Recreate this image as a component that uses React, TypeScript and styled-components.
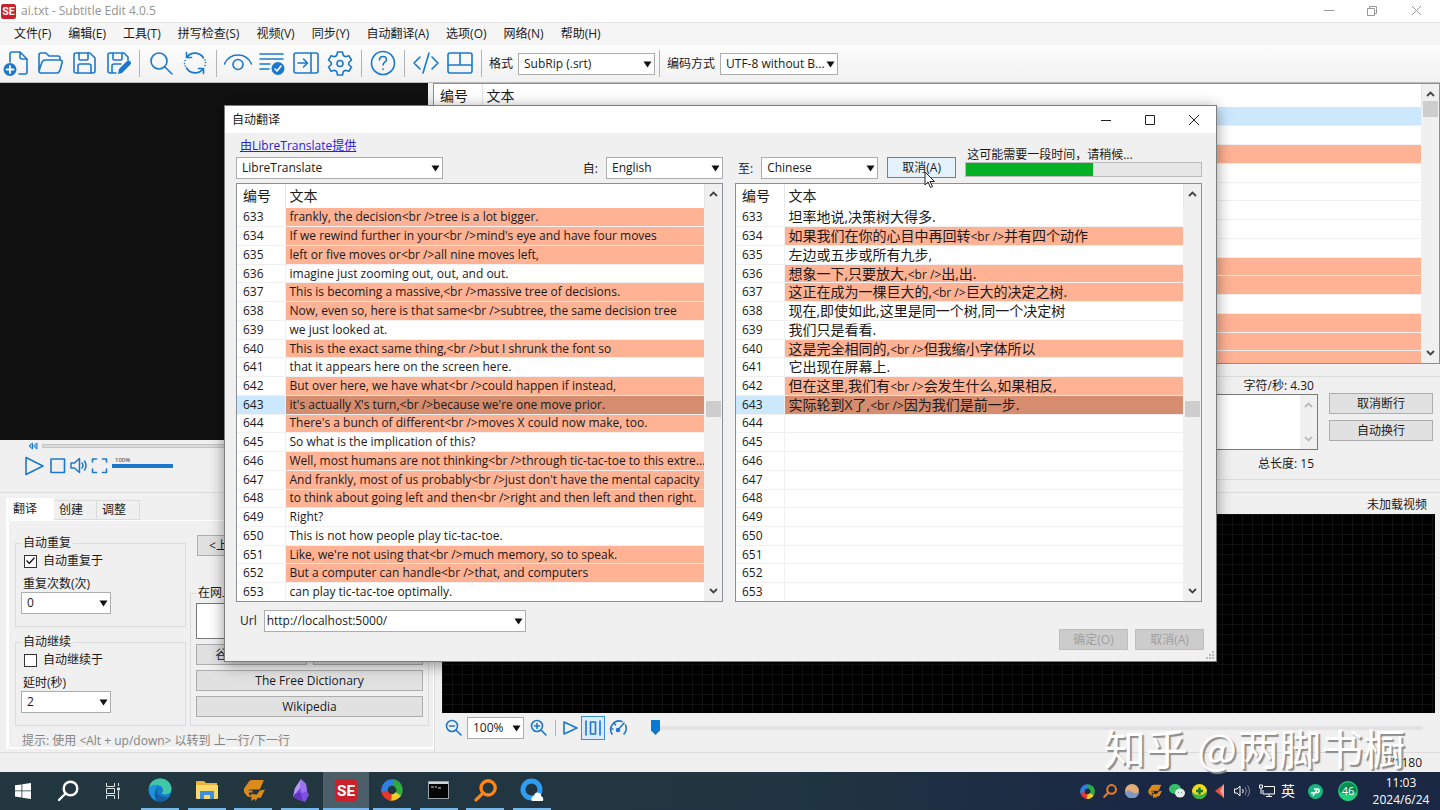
import React from "react";
import styled, { createGlobalStyle, css } from "styled-components";

const UI = `"Open Sans", "Noto Sans CJK SC", sans-serif`;
const BLUE = "#1c78cc";
const SALMON = "#ffb294";

const GlobalStyle = createGlobalStyle`
  *, *::before, *::after { box-sizing: border-box; }
  body { margin: 0; background: #f0f0f0; color: #1a1a1a; font: 12px/16px ${UI}; }
  button, input, select, textarea { font: inherit; color: inherit; margin: 0; }
  svg { display: block; flex: none; }
`;

/* ---------- window frame ---------- */

const Desktop = styled.div`
  position: relative;
  display: flex;
  flex-direction: column;
  min-height: 100vh;
  overflow: hidden;
`;

const TitleBar = styled.header`
  display: flex;
  align-items: center;
  gap: 5px;
  height: 22px;
  padding: 0 13px 0 1px;
  background: #fff;
  color: #939393;
`;

const WindowTitle = styled.h1`
  margin: 0;
  flex: 1;
  font-size: 12px;
  font-weight: 400;
`;

const WindowButtons = styled.div<{ $gap: number }>`
  display: flex;
  gap: ${(p) => p.$gap}px;
`;

const BareButton = styled.button`
  display: flex;
  align-items: center;
  justify-content: center;
  padding: 0;
  border: 0;
  background: transparent;
`;

const MenuBar = styled.nav`
  display: flex;
  align-items: center;
  gap: 17px;
  height: 23px;
  padding-left: 14px;
  background: #f5f5f5;
  border-top: 1px solid #e6e6e6;
`;

const ToolBar = styled.div`
  display: flex;
  align-items: center;
  height: 38px;
  margin-left: -1px;
  background: linear-gradient(#fdfdfd, #f1f1f1);
  border-bottom: 1px solid #bcbcbc;
`;

const ToolButton = styled(BareButton)`
  width: 34px;
  height: 34px;
  padding-bottom: 1px;
`;

const Separator = styled.span<{ $height?: number; $margin?: number }>`
  width: 1px;
  height: ${(p) => p.$height ?? 27}px;
  margin: 0 ${(p) => p.$margin ?? 4}px;
  background: #b4b4b4;
`;

const ToolLabel = styled.label`
  margin: 0 5px 0 3px;
`;

/* ---------- form controls ---------- */

const ComboFrame = styled.span<{ $width: number }>`
  position: relative;
  display: inline-flex;
  width: ${(p) => p.$width}px;
  height: 22px;
  background: #fff;
  border: 1px solid #adadad;
`;

const comboField = css`
  width: 100%;
  padding: 0 10px 0 5px;
  border: 0;
  background: transparent;
  outline: 0;
`;

const ComboSelect = styled.select`
  appearance: none;
  ${comboField}
`;

const ComboInput = styled.input`
  ${comboField}
  padding-left: 2px;
`;

const ComboArrow = styled.svg`
  position: absolute;
  right: 2px;
  top: 7px;
  pointer-events: none;
`;

function Arrow() {
  return (
    <ComboArrow width="9" height="7" viewBox="0 0 9 7">
      <path d="M0.5 0.5h8L4.5 6.5z" fill="#111" />
    </ComboArrow>
  );
}

function Combo({ id, value, width, label }: { id: string; value: string; width: number; label?: string }) {
  return (
    <ComboFrame $width={width}>
      <ComboSelect id={id} defaultValue={value} aria-label={label}>
        <option>{value}</option>
      </ComboSelect>
      <Arrow />
    </ComboFrame>
  );
}

const PushButton = styled.button<{ $tone?: "focus" | "off" }>`
  height: 21px;
  padding: 0 8px;
  border: 1px solid #adadad;
  background: #e1e1e1;
  line-height: 16px;
  white-space: nowrap;
  ${(p) => p.$tone === "focus" && "border-color: #3b8fd4; background: #e5f1fb;"}
  ${(p) => p.$tone === "off" && "border-color: #bfbfbf; background: #ccc; color: #a0a0a0;"}
`;

const CheckRow = styled.label`
  display: flex;
  align-items: center;
  gap: 6px;
  height: 20px;
`;

const CheckBox = styled.input`
  appearance: none;
  display: grid;
  place-content: center;
  width: 13px;
  height: 13px;
  border: 1px solid #333;
  background: #fff;
  &:checked::before {
    content: "";
    width: 9px;
    height: 9px;
    background: #222;
    clip-path: polygon(0 50%, 12% 38%, 36% 64%, 88% 8%, 100% 20%, 36% 88%);
  }
`;

/* ---------- lists ---------- */

const ListFrame = styled.div<{ $height: number }>`
  display: flex;
  height: ${(p) => p.$height}px;
  min-width: 0;
  overflow: hidden;
  border: 1px solid #8a8f98;
  background: #fff;
`;

const TableArea = styled.div`
  flex: 1;
  min-width: 0;
`;

const Table = styled.table<{ $height: number }>`
  width: 100%;
  height: ${(p) => p.$height}px;
  table-layout: fixed;
  border-collapse: collapse;
  line-height: 16px;
`;

const HeadCell = styled.th<{ $width?: number; $height?: number }>`
  width: ${(p) => (p.$width ? p.$width + "px" : "auto")};
  height: ${(p) => p.$height ?? 24}px;
  padding: 0 0 0 4px;
  border-right: 1px solid #e5e5e5;
  font-size: 14px;
  font-weight: 400;
  text-align: left;
  &:first-child { padding-left: 6px; }
`;

type Tone = "long" | "selected" | "current" | undefined;

const toneColor = (tone: Tone) =>
  tone === "long" ? SALMON : tone === "selected" ? "#d68c6e" : tone === "current" ? "#cce8ff" : "#fff";

const Cell = styled.td<{ $tone?: Tone; $cjk?: boolean }>`
  height: 18px;
  padding: 0 0 0 4px;
  border-bottom: 1px solid #f0f0f0;
  border-right: 1px solid #f0f0f0;
  background: ${(p) => toneColor(p.$tone)};
  overflow: hidden;
  white-space: nowrap;
  font-size: ${(p) => (p.$cjk ? 14 : 12)}px;
  &:first-child { padding-left: 6px; }
`;

const Latin = styled.span`
  font-size: 12px;
  line-height: 12px;
`;

const ScrollTrack = styled.div<{ $thumb: number; $thumbHeight: number }>`
  display: flex;
  flex-direction: column;
  justify-content: space-between;
  width: 17px;
  padding: 6px 0;
  background-color: #f0f0f0;
  background-image: linear-gradient(#cdcdcd, #cdcdcd);
  background-repeat: no-repeat;
  background-size: 15px ${(p) => p.$thumbHeight}px;
  background-position: 1px ${(p) => p.$thumb}px;
`;

function Chevron({ down, color = "#444" }: { down?: boolean; color?: string }) {
  return (
    <svg width="17" height="8" viewBox="0 0 17 8" fill="none" stroke={color} strokeWidth="1.800">
      <path d={down ? "M5 2l3.500 3.500L12 2" : "M5 6l3.500-3.500L12 6"} />
    </svg>
  );
}

function ScrollBar({ thumb, thumbHeight = 16, color }: { thumb: number; thumbHeight?: number; color?: string }) {
  return (
    <ScrollTrack $thumb={thumb} $thumbHeight={thumbHeight} aria-hidden>
      <Chevron color={color} />
      <Chevron down color={color} />
    </ScrollTrack>
  );
}

/* ---------- main area ---------- */

const Upper = styled.main`
  display: grid;
  grid-template-columns: 428px 1fr;
  gap: 5px;
  height: 409px;
`;

const Column = styled.div`
  display: flex;
  flex-direction: column;
  min-width: 0;
`;

const Video = styled.div`
  height: 357px;
  background: #111;
`;

const SeekRow = styled.div`
  display: flex;
  align-items: center;
  gap: 4px;
  height: 12px;
  padding-left: 28px;
`;

const SeekBar = styled.input`
  appearance: none;
  flex: 1;
  height: 4px;
  background: #dcdcdc;
  border: 1px solid #c4c4c4;
  &::-webkit-slider-thumb { appearance: none; width: 0; }
`;

const PlayerRow = styled.div`
  display: flex;
  align-items: center;
  gap: 4px;
  height: 27px;
  padding-left: 24px;
`;

const VolumeBox = styled.label`
  display: flex;
  flex-direction: column;
  width: 61px;
  padding-bottom: 7px;
  font-size: 6px;
  line-height: 8px;
  text-indent: 3px;
`;

const Volume = styled.input`
  appearance: none;
  width: 100%;
  height: 4px;
  margin: 0;
  background: ${BLUE};
  &::-webkit-slider-thumb { appearance: none; width: 0; }
`;

const EditGroup = styled.section`
  display: grid;
  grid-template-columns: 1fr 104px;
  column-gap: 11px;
  margin-top: 12px;
  height: 104px;
  padding: 0 7px 0 8px;
  border: 1px solid #dcdcdc;
  border-right: 0;
`;

const RightNote = styled.p`
  margin: 0;
  padding-right: 4px;
  line-height: 17px;
  text-align: right;
`;

const TextFrame = styled.div`
  display: flex;
  height: 56px;
  margin-bottom: 5px;
  border: 1px solid #7a7a7a;
  background: #fff;
`;

const TextArea = styled.textarea`
  flex: 1;
  border: 0;
  resize: none;
  outline: 0;
`;

const ButtonStack = styled.div`
  display: flex;
  flex-direction: column;
  gap: 6px;
  padding-top: 16px;
`;

const Lower = styled.div`
  display: grid;
  grid-template-columns: 435px 1fr;
  flex: 1;
  min-height: 261px;
  border-bottom: 1px solid #dcdcdc;
`;

const TabSide = styled.section`
  display: flex;
  flex-direction: column;
  padding: 5px 0 3px 6px;
  border-top: 1px solid #dcdcdc;
  border-right: 1px solid #dcdcdc;
`;

const Tabs = styled.div`
  display: flex;
  align-items: flex-end;
  height: 22px;
`;

const Tab = styled.button<{ $active?: boolean }>`
  width: ${(p) => (p.$active ? 48 : 43)}px;
  height: ${(p) => (p.$active ? 22 : 20)}px;
  padding: 0 0 0 ${(p) => (p.$active ? 7 : 5)}px;
  border: 1px solid ${(p) => (p.$active ? "#fff" : "#dcdcdc")};
  border-left-width: 0;
  background: ${(p) => (p.$active ? "#fff" : "#f0f0f0")};
  text-align: left;
`;

const TabPanel = styled.div`
  flex: 1;
  display: grid;
  grid-template-columns: 171px 1fr;
  grid-template-rows: 191px 21px;
  column-gap: 4px;
  padding: 14px 4px 0 6px;
  border: 3px solid #fff;
  border-top-width: 1px;
  border-right-width: 1px;
  border-bottom-width: 2px;
`;

const Group = styled.fieldset`
  display: flex;
  flex-direction: column;
  height: 92px;
  min-width: 0;
  margin: 0;
  padding: 0 5px;
  border: 1px solid #dcdcdc;
`;

const GroupColumn = styled.div`
  display: flex;
  flex-direction: column;
  gap: 7px;
`;

const Legend = styled.legend`
  padding: 0 2px;
  line-height: 16px;
`;

const FieldLabel = styled.label`
  margin-top: 5px;
  padding-left: 2px;
  line-height: 16px;
`;

const Indent = styled.div`
  padding-left: 3px;
`;

const SearchColumn = styled.div`
  display: flex;
  flex-direction: column;
  align-items: flex-start;
  padding-left: 7px;
`;

const SearchGroup = styled.fieldset`
  display: flex;
  flex-direction: column;
  align-self: stretch;
  gap: 5px;
  height: 141px;
  margin: 29px 0 0 -7px;
  padding: 2px 5px 0;
  border: 1px solid #dcdcdc;
`;

const SearchText = styled.textarea`
  height: 36px;
  border: 1px solid #7a7a7a;
  resize: none;
`;

const ButtonPair = styled.div`
  display: grid;
  grid-template-columns: 1fr 1fr;
  gap: 6px;
`;

const Hint = styled.p`
  grid-column: 1 / -1;
  margin: 0;
  padding: 8px 0 0 7px;
  color: #858585;
  line-height: 14px;
`;

const WaveSide = styled.section`
  display: flex;
  flex-direction: column;
  min-width: 0;
  padding: 2px 5px 0 7px;
  border-top: 1px solid #dcdcdc;
`;

const WaveNote = styled.p`
  margin: 0;
  padding-right: 8px;
  line-height: 19px;
  text-align: right;
`;

const Wave = styled.div`
  flex: 1;
  background-color: #000;
  background-image: linear-gradient(90deg, #121212 1px, transparent 1px), linear-gradient(#121212 1px, transparent 1px);
  background-size: 10px 10px;
`;

const WaveTools = styled.div`
  display: flex;
  align-items: center;
  gap: 3px;
  height: 39px;
  padding-bottom: 10px;
`;

const PressedBox = styled(BareButton)`
  width: 24px;
  height: 24px;
  border: 1px solid #3b8fd4;
  background: #dcebf8;
`;

const PositionBar = styled.input`
  appearance: none;
  flex: 1;
  height: 16px;
  margin: 0 12px 0 20px;
  background: linear-gradient(#e2e2e2, #e2e2e2) 0 6px / 100% 4px no-repeat;
  &::-webkit-slider-thumb {
    appearance: none;
    width: 9px;
    height: 15px;
    background: #0b78d4;
    clip-path: polygon(0 0, 100% 0, 100% 70%, 50% 100%, 0 70%);
  }
`;

const StatusBar = styled.footer`
  height: 19px;
  padding-right: 18px;
  line-height: 19px;
  text-align: right;
`;

/* ---------- dialog ---------- */

const Dialog = styled.section`
  position: absolute;
  z-index: 2;
  left: 224px;
  right: 223px;
  top: 105px;
  display: flex;
  flex-direction: column;
  height: 557px;
  border: 1px solid #7d7d7d;
  background: #f0f0f0;
  box-shadow: 0 3px 14px rgba(0, 0, 0, 0.42);
`;

const DialogTitle = styled.header`
  display: flex;
  align-items: center;
  justify-content: space-between;
  height: 27px;
  padding: 0 16px 0 7px;
  background: #fff;
`;

const DialogHeading = styled.h2`
  margin: 0;
  font-size: 12px;
  font-weight: 400;
`;

const Halves = styled.div`
  display: grid;
  grid-template-columns: 487fr 467fr;
  gap: 12px;
  padding: 0 14px 0 11px;
`;

const HeadHalf = styled.div`
  display: flex;
  align-items: flex-end;
  height: 46px;
`;

const EngineBox = styled.div`
  display: flex;
  flex-direction: column;
  flex: 1;
  height: 41px;
  justify-content: space-between;
  align-items: flex-start;
`;

const SourceLink = styled.a`
  margin-left: 4px;
  color: #2a22d8;
  line-height: 16px;
`;

const LangLabel = styled.label`
  padding: 0 8px 0 3px;
  line-height: 20px;
`;

const ActionButton = styled(PushButton)`
  width: 69px;
  margin: 0 9px 1px;
`;

const ProgressBox = styled.label`
  display: flex;
  flex-direction: column;
  flex: 1;
  margin-bottom: 2px;
  line-height: 15px;
`;

const ProgressText = styled.span`
  padding-left: 2px;
`;

const Progress = styled.progress`
  appearance: none;
  display: block;
  width: 100%;
  height: 15px;
  border: 1px solid #bcbcbc;
  &::-webkit-progress-bar { background: #e6e6e6; }
  &::-webkit-progress-value { background: #06b025; }
`;

const ListsRow = styled(Halves)`
  padding-top: 4px;
`;

const UrlRow = styled.div`
  display: flex;
  align-items: center;
  gap: 7px;
  padding: 8px 0 0 15px;
`;

const DialogButtons = styled.div`
  display: flex;
  justify-content: flex-end;
  gap: 7px;
  margin-top: -3px;
  padding-right: 12px;
  button { width: 69px; }
`;

const Grip = styled.svg`
  position: absolute;
  right: 1px;
  bottom: 1px;
`;

const Cursor = styled.svg`
  position: absolute;
  z-index: 3;
  left: 924px;
  top: 171px;
`;

const Watermark = styled.p`
  position: absolute;
  z-index: 4;
  right: 35px;
  bottom: 40px;
  margin: 0;
  color: #fff;
  font: 400 42px/46px "Noto Sans CJK SC", sans-serif;
  text-shadow: 2px 2px 1px #8d8d8d;
  pointer-events: none;
`;

/* ---------- taskbar ---------- */

const TaskBar = styled.nav`
  display: flex;
  align-items: stretch;
  height: 38px;
  color: #fff;
  background: linear-gradient(90deg, #22373f 0%, #203541 55%, #1a2744 80%, #1a2843 100%);
`;

const SystemButton = styled(BareButton)`
  width: 45px;
`;

const Apps = styled.div`
  display: flex;
  width: 418px;
  margin-left: 2px;
`;

const AppButton = styled(BareButton)<{ $active?: boolean }>`
  flex: 1;
  border-bottom: 2px solid transparent;
  background:
    linear-gradient(#76b9ed, #76b9ed) center bottom / ${(p) => (p.$active ? 46 : 38)}px 2px no-repeat border-box,
    ${(p) => (p.$active ? "#4c5f68" : "transparent")};
`;

const Tray = styled.div`
  display: flex;
  align-items: center;
  margin-left: auto;
`;

const TrayCell = styled.span<{ $width: number }>`
  display: flex;
  justify-content: center;
  width: ${(p) => p.$width}px;
  font-size: 14px;
`;

const Clock = styled.time`
  width: 78px;
  line-height: 17px;
  text-align: center;
`;

/* ---------- icons ---------- */

function Icon({ children, size = 28, w = 2 }: { children: React.ReactNode; size?: number; w?: number }) {
  return (
    <svg width={size} height={size} viewBox={`0 0 ${size} ${size}`} fill="none" stroke={BLUE} strokeWidth={w} strokeLinejoin="round" strokeLinecap="round">
      {children}
    </svg>
  );
}

const toolIcons: { name: string; art: React.ReactNode }[][] = [
  [
    { name: "新建", art: <><path d="M8 13V5q0-2 2-2h8l7 7v13q0 2-2 2h-6M18 3v5q0 2 2 2h5" /><circle cx="8" cy="20.500" r="6.500" fill={BLUE} stroke="none" /><path d="M8 17v7M4.500 20.500h7" stroke="#fff" strokeWidth="1.800" /></> },
    { name: "打开", art: <path d="M3 22V6q0-2 2-2h5l3 3h9q2 0 2 2v2M3 22l3-9q1-2 3-2h15q3 0 2 3l-2 7q-1 3-3 3H5q-2 0-2-2" /> },
    { name: "保存", art: <><path d="M6 4h14l5 5v13q0 2-2 2H6q-2 0-2-2V6q0-2 2-2z" /><path d="M9 4v6q0 1 1 1h7q1 0 1-1V4M8 24v-7q0-2 2-2h9q2 0 2 2v7" /></> },
    { name: "另存为", art: <><path d="M12 24H6q-2 0-2-2V6q0-2 2-2h14l4 4v3M9 4v6q0 1 1 1h7q1 0 1-1V4M8 24v-7q0-2 2-2h7" /><path d="M14 25l1-5 8-8q2-1 3 0 2 2 0 4l-8 8z" fill={BLUE} stroke="none" /></> },
  ],
  [
    { name: "查找", art: <><circle cx="12" cy="12" r="8" /><path d="M18 18l7 7" /></> },
    { name: "替换", art: <><path d="M6 8a10 10 0 0 1 16.500 1M5.500 3.500v5h5M22 20a10 10 0 0 1-16.500-1M22.500 24.500v-5h-5" /><path d="M3.500 14.500v.100M4 11.500v.100M4.300 17v.100M24.500 13.500v.100M24 16.500v.100M24 11v.100" /></> },
  ],
  [
    { name: "视觉同步", art: <><path d="M0.500 15q4-9 13.500-9t13.500 9" /><circle cx="14" cy="15.500" r="5" /></> },
    { name: "修正常见错误", art: <><path d="M2 5h23M2 10h23M2 15h10M2 20h9" /><circle cx="20" cy="19.500" r="6.500" fill={BLUE} stroke="none" /><path d="M17 20l2 2 4-5" stroke="#fff" strokeWidth="1.600" /></> },
    { name: "导入", art: <><path d="M4 4h20q2 0 2 2v16q0 2-2 2H4q-2 0-2-2V6q0-2 2-2zM19 4v20M6 14h9M11.500 10l4 4-4 4" /></> },
    { name: "设置", art: <><path d="M11.500 3h5l.800 3.500 2.200 1.200 3.400-1 2.500 4.300-2.600 2.500v2l2.600 2.500-2.500 4.300-3.400-1-2.200 1.200-.800 3.500h-5l-.800-3.500-2.200-1.200-3.400 1L2.600 18l2.600-2.500v-2L2.600 11l2.500-4.300 3.400 1 2.200-1.200z" /><circle cx="14" cy="14.500" r="3" /></> },
  ],
  [
    { name: "帮助", art: <><circle cx="14" cy="14" r="11.500" /><path d="M10.500 11q0-3.500 3.500-3.500t3.500 3.200c0 2.500-3.500 2.500-3.500 5.300M14 20v.400" /></> },
  ],
  [
    { name: "源视图", art: <path d="M8 8l-6 6 6 6M20 8l6 6-6 6M17 4l-6 20" /> },
    { name: "布局", art: <path d="M4 4h20q2 0 2 2v16q0 2-2 2H4q-2 0-2-2V6q0-2 2-2zM2 16h24M14 4v12" /> },
  ],
];

function SeLogo({ size }: { size: number }) {
  return (
    <svg width={size} height={size} viewBox="0 0 20 20">
      <rect width="20" height="20" rx="3" fill="#c9202b" />
      <text x="10" y="15" fill="#fff" fontFamily="Roboto, sans-serif" fontWeight="700" fontSize="14" textAnchor="middle">SE</text>
    </svg>
  );
}

function Swirl({ size }: { size: number }) {
  return (
    <svg width={size} height={size} viewBox="0 0 22 22" fill="none" strokeWidth="6.500">
      <path d="M11 3.500a7.500 7.500 0 0 1 6.500 3.700" stroke="#27a844" />
      <path d="M16.300 5.700a7.500 7.500 0 0 1 .200 10.500" stroke="#2fae3e" />
      <path d="M17.300 15a7.500 7.500 0 0 1-8.800 3" stroke="#f7c92b" />
      <path d="M10.500 18.500a7.500 7.500 0 0 1-7-8" stroke="#e8382e" />
      <path d="M3.600 12.500A7.500 7.500 0 0 1 12 3.600" stroke="#2f7fe0" />
    </svg>
  );
}

function Lens({ size, color, flip }: { size: number; color: string; flip?: boolean }) {
  return (
    <svg width={size} height={size} viewBox="0 0 22 22" fill="none" stroke={color} strokeWidth={flip ? 3.2 : 2.4} strokeLinecap="round">
      <circle cx="13.500" cy="8.500" r="6.800" />
      <path d="M8.500 13.500L2 20" />
    </svg>
  );
}

function Book({ size }: { size: number }) {
  return (
    <svg width={size} height={size} viewBox="0 0 22 22" fill="#dd8a1c">
      <path d="M7 2q1-1 3-1h11l-4 9H9q-4 0-5 5-3-2-2-6z" />
      <path d="M4 13q1-2 3-2h3v2H7q-1 1 0 2l2 1v1H6q-3-1-2-4zM9 14l5 1 3-4 5-1-4 8h-3l-2 3-1-2-3 2z" />
    </svg>
  );
}

const apps: { name: string; active?: boolean; art: React.ReactNode }[] = [
  {
    name: "Edge",
    art: (
      <svg width="24" height="24" viewBox="0 0 24 24">
        <circle cx="12" cy="12" r="11.500" fill="#1779c9" />
        <path d="M1 10C2 4 6.500.500 12 .500c7 0 11.500 5 11.500 10 0 4-3 6-6.500 6-3 0-4-1-3-2 2-2 1-6-3-7C7 6.800 2.500 8 1 10z" fill="#43c6a8" />
        <path d="M1 10c2-3 6-4 9.500-3C6 9 6 16 10 20c2 2 5 2 8 1.500A11.500 11.500 0 0 1 1 10z" fill="#1c93dd" />
        <path d="M9.500 11c-2 5 3 9.500 11 8-3 4-7 5-11 4-4-3-4-9 0-12z" fill="#135ea5" />
      </svg>
    ),
  },
  {
    name: "文件资源管理器",
    art: (
      <svg width="22" height="20" viewBox="0 0 22 20">
        <path d="M0 2q0-1 1-1h7l2 2h11v15H0z" fill="#e8b339" />
        <path d="M0 5h22v13q0 1-1 1H1q-1 0-1-1z" fill="#fbd66b" />
        <path d="M4 19v-8h14v8h-4v-4H8v4z" fill="#3f8fd6" />
      </svg>
    ),
  },
  { name: "阅读", art: <Book size={23} /> },
  {
    name: "Obsidian",
    art: (
      <svg width="18" height="23" viewBox="0 0 18 23">
        <path d="M10 0l5 5 1 7 2 4-4 7-6-2-6-3 2-8z" fill="#7c4fe0" />
        <path d="M10 0l-1 9-5 6-2 3 2-9z" fill="#b79cf6" />
        <path d="M10 0l5 5 1 7-5 2-2-5z" fill="#9a74ee" />
        <path d="M4 15l5-2 3 9-10-4z" fill="#6233c4" />
      </svg>
    ),
  },
  { name: "Subtitle Edit", active: true, art: <SeLogo size={22} /> },
  { name: "ShareX", art: <Swirl size={22} /> },
  {
    name: "命令提示符",
    art: (
      <svg width="21" height="18" viewBox="0 0 21 18">
        <rect x=".5" y=".5" width="20" height="17" fill="#050505" stroke="#9aa3a8" />
        <path d="M1 2h19" stroke="#cfd4d6" strokeWidth="2" />
        <path d="M3 6h3M7 6h2M10 7h3" stroke="#ddd" />
      </svg>
    ),
  },
  { name: "Everything", art: <Lens size={23} color="#ff8412" flip /> },
  {
    name: "QQ浏览器",
    art: (
      <svg width="24" height="24" viewBox="0 0 24 24" fill="none">
        <circle cx="11.500" cy="11.500" r="8.500" stroke="#2e9cf3" strokeWidth="5" />
        <path d="M12 23q-2-4 2-5 1-5 5-3 2 0 2 3 3 1 2 5z" fill="#fff" />
      </svg>
    ),
  },
];

const tray: { width: number; art: React.ReactNode }[] = [
  { width: 22, art: <Swirl size={15} /> },
  { width: 23, art: <Lens size={14} color="#f07c1c" flip /> },
  { width: 22, art: <svg width="14" height="14" viewBox="0 0 14 14"><circle cx="7" cy="7" r="7" fill="#e3ad77" /><path d="M0 8q4-3 7 0t7-1a7 7 0 0 1-14 1z" fill="#7c98c8" /></svg> },
  { width: 23, art: <Book size={15} /> },
  { width: 22, art: <svg width="16" height="14" viewBox="0 0 16 14"><ellipse cx="6" cy="5" rx="6" ry="5" fill="#2fc465" /><ellipse cx="11" cy="9" rx="5" ry="4.500" fill="#e4ece8" /><path d="M4 4v.5M8 4v.5M9.500 8v.5M12.500 8v.5" stroke="#22373f" /></svg> },
  { width: 22, art: <svg width="15" height="15" viewBox="0 0 15 15"><circle cx="7.500" cy="7.500" r="7.500" fill="#f2dc1a" /><path d="M0 8a7.500 7.500 0 0 0 15-1q-7 8-15 1z" fill="#35b34a" /><path d="M7.500 3.500v7M4 7h7" stroke="#17773a" strokeWidth="2.400" /></svg> },
  { width: 20, art: <svg width="10" height="14" viewBox="0 0 10 14"><path d="M9 0v14L0 7z" fill="#e2503f" /><path d="M9 0v14L5 7z" fill="#f3a597" /></svg> },
  { width: 24, art: <svg width="16" height="14" viewBox="0 0 16 14" fill="none" stroke="#fff"><path d="M.500 5h2.500l3-3v10l-3-3H.500zM8.500 5q1.500 2 0 4" /><path d="M11 3q3 4 0 8M13.500 1.500q4 5.500 0 11" stroke="#7f8aa0" /></svg> },
  { width: 26, art: <svg width="16" height="14" viewBox="0 0 16 14" fill="none" stroke="#fff"><path d="M5 2.500h10.500v7.500H4V6M7 12.500h6M10 10v2.500M.500 1h3v3h-3zM2 4v6" /></svg> },
  { width: 16, art: "英" },
  { width: 38, art: <svg width="15" height="15" viewBox="0 0 15 15"><circle cx="7.500" cy="7.500" r="7.500" fill="#18b77e" /><path d="M3 9h4l2.500-4.500M6 5h4q2.500 1 0 3.500H8M6.500 9L5 12" stroke="#fff" strokeWidth="1.500" fill="none" /></svg> },
  {
    width: 28,
    art: (
      <svg width="20" height="20" viewBox="0 0 20 20">
        <circle cx="10" cy="10" r="9.300" fill="#0b8a4f" stroke="#17d483" strokeWidth="1.200" />
        <path d="M1 11q9 4 18 0a9 9 0 0 1-18 0z" fill="#1fd07f" />
        <text x="10" y="14" fill="#fff" fontSize="11" fontFamily="Open Sans, sans-serif" textAnchor="middle">46</text>
      </svg>
    ),
  },
];

/* ---------- data ---------- */

const menus = ["文件(F)", "编辑(E)", "工具(T)", "拼写检查(S)", "视频(V)", "同步(Y)", "自动翻译(A)", "选项(O)", "网络(N)", "帮助(H)"];

type Line = { n: number; text: string; tone?: Tone };

const source: Line[] = [
  { n: 633, text: "frankly, the decision<br />tree is a lot bigger.", tone: "long" },
  { n: 634, text: "If we rewind further in your<br />mind's eye and have four moves", tone: "long" },
  { n: 635, text: "left or five moves or<br />all nine moves left,", tone: "long" },
  { n: 636, text: "imagine just zooming out, out, and out." },
  { n: 637, text: "This is becoming a massive,<br />massive tree of decisions.", tone: "long" },
  { n: 638, text: "Now, even so, here is that same<br />subtree, the same decision tree", tone: "long" },
  { n: 639, text: "we just looked at." },
  { n: 640, text: "This is the exact same thing,<br />but I shrunk the font so", tone: "long" },
  { n: 641, text: "that it appears here on the screen here." },
  { n: 642, text: "But over here, we have what<br />could happen if instead,", tone: "long" },
  { n: 643, text: "it's actually X's turn,<br />because we're one move prior.", tone: "selected" },
  { n: 644, text: "There's a bunch of different<br />moves X could now make, too.", tone: "long" },
  { n: 645, text: "So what is the implication of this?" },
  { n: 646, text: "Well, most humans are not thinking<br />through tic-tac-toe to this extre...", tone: "long" },
  { n: 647, text: "And frankly, most of us probably<br />just don't have the mental capacity", tone: "long" },
  { n: 648, text: "to think about going left and then<br />right and then left and then right.", tone: "long" },
  { n: 649, text: "Right?" },
  { n: 650, text: "This is not how people play tic-tac-toe." },
  { n: 651, text: "Like, we're not using that<br />much memory, so to speak.", tone: "long" },
  { n: 652, text: "But a computer can handle<br />that, and computers", tone: "long" },
  { n: 653, text: "can play tic-tac-toe optimally." },
];

const translated: Record<number, [string, Tone?]> = {
  633: ["坦率地说,决策树大得多."],
  634: ["如果我们在你的心目中再回转<br />并有四个动作", "long"],
  635: ["左边或五步或所有九步,"],
  636: ["想象一下,只要放大,<br />出,出.", "long"],
  637: ["这正在成为一棵巨大的,<br />巨大的决定之树.", "long"],
  638: ["现在,即使如此,这里是同一个树,同一个决定树"],
  639: ["我们只是看看."],
  640: ["这是完全相同的,<br />但我缩小字体所以", "long"],
  641: ["它出现在屏幕上."],
  642: ["但在这里,我们有<br />会发生什么,如果相反,", "long"],
  643: ["实际轮到X了,<br />因为我们是前一步.", "selected"],
};

const target: Line[] = source.map(({ n }) => ({ n, text: translated[n]?.[0] ?? "", tone: translated[n]?.[1] }));

const mainTones: Tone[] = ["current", undefined, "long", undefined, undefined, undefined, undefined, undefined, "long", "long", undefined, "long", "long", "long"];

function LineText({ text, cjk }: { text: string; cjk?: boolean }) {
  if (!cjk || !text.includes("<br />")) return <>{text}</>;
  const [before, after] = text.split("<br />");
  return <>{before}<Latin>{"<br />"}</Latin>{after}</>;
}

function LineList({ lines, cjk }: { lines: Line[]; cjk?: boolean }) {
  return (
    <ListFrame $height={419}>
      <TableArea>
        <Table $height={418}>
          <thead>
            <tr><HeadCell $width={48}>编号</HeadCell><HeadCell>文本</HeadCell></tr>
          </thead>
          <tbody>
            {lines.map((l) => (
              <tr key={l.n}>
                <Cell $tone={l.n === 643 ? "current" : undefined}>{l.n}</Cell>
                <Cell $tone={l.tone} $cjk={cjk}><LineText text={l.text} cjk={cjk} /></Cell>
              </tr>
            ))}
          </tbody>
        </Table>
      </TableArea>
      <ScrollBar thumb={217} />
    </ListFrame>
  );
}

/* ---------- page ---------- */

function MainWindow() {
  return (
    <>
      <TitleBar>
        <SeLogo size={15} />
        <WindowTitle>ai.txt - Subtitle Edit 4.0.5</WindowTitle>
        <WindowButtons $gap={22}>
          <BareButton aria-label="最小化"><svg width="22" height="14" viewBox="0 0 22 14" stroke="#999"><path d="M3 6.500h10" /></svg></BareButton>
          <BareButton aria-label="还原"><svg width="22" height="14" viewBox="0 0 22 14" stroke="#999" fill="none"><path d="M2.500 4.500h7v7h-7zM4.500 4.500v-2h7v7h-2" /></svg></BareButton>
          <BareButton aria-label="关闭"><svg width="18" height="14" viewBox="0 0 18 14" stroke="#999"><path d="M3 2l9 9M12 2l-9 9" /></svg></BareButton>
        </WindowButtons>
      </TitleBar>
      <MenuBar>
        {menus.map((m) => <BareButton key={m}>{m}</BareButton>)}
      </MenuBar>
      <ToolBar>
        {toolIcons.map((group, i) => (
          <React.Fragment key={i}>
            {group.map((t) => (
              <ToolButton key={t.name} aria-label={t.name}><Icon w={1.6}>{t.art}</Icon></ToolButton>
            ))}
            <Separator />
          </React.Fragment>
        ))}
        <ToolLabel htmlFor="format">格式</ToolLabel>
        <Combo id="format" value="SubRip (.srt)" width={137} />
        <Separator />
        <ToolLabel htmlFor="encoding">编码方式</ToolLabel>
        <Combo id="encoding" value="UTF-8 without B..." width={118} />
      </ToolBar>

      <Upper>
        <Column>
          <Video />
          <SeekRow>
            <svg width="10" height="8" viewBox="0 0 10 8" fill="#9cc6ea" stroke={BLUE}><path d="M4.500 1v6L1 4zM9 1v6L5.500 4z" /></svg>
            <SeekBar type="range" defaultValue={0} aria-label="播放位置" />
          </SeekRow>
          <PlayerRow>
            <BareButton aria-label="播放"><Icon size={20} w={1.6}><path d="M2 1.500l17 8.500-17 8.500z" /></Icon></BareButton>
            <BareButton aria-label="停止"><Icon size={18} w={1.6}><path d="M3 2h13.500v13.500H3z" /></Icon></BareButton>
            <BareButton aria-label="静音"><Icon size={17} w={1.5}><path d="M1 6h3.500l5-4.500v14l-5-4.500H1zM12 6q2 2.500 0 5M14.500 4q3 4.500 0 9" /></Icon></BareButton>
            <BareButton aria-label="全屏"><Icon size={17} w={1.6}><path d="M1.500 5V2h4M11.500 2h4v3M15.500 12v3.500h-4M5.500 15.500h-4V12" /></Icon></BareButton>
            <VolumeBox>100%<Volume type="range" defaultValue={100} /></VolumeBox>
          </PlayerRow>
        </Column>
        <Column>
          <ListFrame $height={281}>
            <TableArea>
              <Table $height={286}>
                <thead><tr><HeadCell $width={48} $height={23}>编号</HeadCell><HeadCell $height={23}>文本</HeadCell></tr></thead>
                <tbody>
                  {mainTones.map((t, i) => (
                    <tr key={i}>
                      <Cell $tone={t === "current" ? t : undefined} />
                      <Cell $tone={t} />
                    </tr>
                  ))}
                </tbody>
              </Table>
            </TableArea>
            <ScrollBar thumb={17} />
          </ListFrame>
          <EditGroup>
            <div>
              <RightNote>字符/秒: 4.30</RightNote>
              <TextFrame>
                <TextArea aria-label="文本" />
                <ScrollBar thumb={0} thumbHeight={0} color="#bbb" />
              </TextFrame>
              <RightNote>总长度: 15</RightNote>
            </div>
            <ButtonStack>
              <PushButton>取消断行</PushButton>
              <PushButton>自动换行</PushButton>
            </ButtonStack>
          </EditGroup>
        </Column>
      </Upper>

      <Lower>
        <TabSide>
          <Tabs>
            <Tab $active>翻译</Tab>
            <Tab>创建</Tab>
            <Tab>调整</Tab>
          </Tabs>
          <TabPanel>
            <GroupColumn>
              <Group>
                <Legend>自动重复</Legend>
                <Indent><CheckRow><CheckBox type="checkbox" defaultChecked />自动重复于</CheckRow></Indent>
                <FieldLabel htmlFor="repeat">重复次数(次)</FieldLabel>
                <Combo id="repeat" value="0" width={90} />
              </Group>
              <Group>
                <Legend>自动继续</Legend>
                <Indent><CheckRow><CheckBox type="checkbox" />自动继续于</CheckRow></Indent>
                <FieldLabel htmlFor="delay">延时(秒)</FieldLabel>
                <Combo id="delay" value="2" width={90} />
              </Group>
            </GroupColumn>
            <SearchColumn>
              <PushButton>&nbsp;&lt;上一行</PushButton>
              <SearchGroup>
                <Legend>在网上搜索文本</Legend>
                <SearchText aria-label="在网上搜索文本" />
                <ButtonPair>
                  <PushButton>谷歌在线翻译</PushButton>
                  <PushButton aria-label="谷歌" />
                </ButtonPair>
                <PushButton>The Free Dictionary</PushButton>
                <PushButton>Wikipedia</PushButton>
              </SearchGroup>
            </SearchColumn>
            <Hint>提示: 使用 &lt;Alt + up/down&gt; 以转到 上一行/下一行</Hint>
          </TabPanel>
        </TabSide>
        <WaveSide>
          <WaveNote>未加载视频</WaveNote>
          <Wave />
          <WaveTools>
            <BareButton aria-label="缩小"><Icon size={22} w={1.6}><circle cx="10" cy="9" r="5.500" /><path d="M14 13l5 5M7.500 9h5" /></Icon></BareButton>
            <Combo id="zoom" value="100%" width={57} label="缩放" />
            <BareButton aria-label="放大"><Icon size={22} w={1.6}><circle cx="10" cy="9" r="5.500" /><path d="M14 13l5 5M7.500 9h5M10 6.500v5" /></Icon></BareButton>
            <Separator $height={16} $margin={3} />
            <BareButton aria-label="播放"><Icon size={16} w={1.6}><path d="M2 2l13 6-13 6z" /></Icon></BareButton>
            <PressedBox aria-label="居中"><Icon size={20} w={1.6}><path d="M3 3v14M17 3v14M7.500 4h5v12h-5z" /></Icon></PressedBox>
            <BareButton aria-label="速度"><Icon size={20} w={1.6}><path d="M4 16A8.500 8.500 0 0 1 14 3.500M17.500 7a8.500 8.500 0 0 1-1.500 9M10 12l6-7M4 11h1M7 6l.500 1" /><circle cx="10" cy="12" r="1.500" fill={BLUE} /></Icon></BareButton>
            <PositionBar type="range" defaultValue={0} aria-label="位置" />
          </WaveTools>
        </WaveSide>
      </Lower>
      <StatusBar>1/1180</StatusBar>
    </>
  );
}

function TranslateDialog() {
  return (
    <Dialog role="dialog" aria-label="自动翻译">
      <DialogTitle>
        <DialogHeading>自动翻译</DialogHeading>
        <WindowButtons $gap={32}>
          <BareButton aria-label="最小化"><svg width="12" height="12" viewBox="0 0 12 12" stroke="#222"><path d="M1 6.500h10" /></svg></BareButton>
          <BareButton aria-label="最大化"><svg width="12" height="12" viewBox="0 0 12 12" stroke="#222" fill="none"><path d="M1.500 1.500h9v9h-9z" /></svg></BareButton>
          <BareButton aria-label="关闭"><svg width="12" height="12" viewBox="0 0 12 12" stroke="#222"><path d="M1 1l10 10M11 1L1 11" /></svg></BareButton>
        </WindowButtons>
      </DialogTitle>
      <Halves>
        <HeadHalf>
          <EngineBox>
            <SourceLink href="#libretranslate">由LibreTranslate提供</SourceLink>
            <Combo id="engine" value="LibreTranslate" width={207} label="翻译引擎" />
          </EngineBox>
          <LangLabel htmlFor="from">自:</LangLabel>
          <Combo id="from" value="English" width={117} />
        </HeadHalf>
        <HeadHalf>
          <LangLabel htmlFor="to">至:</LangLabel>
          <Combo id="to" value="Chinese" width={117} />
          <ActionButton $tone="focus">取消(A)</ActionButton>
          <ProgressBox>
            <ProgressText>这可能需要一段时间，请稍候...</ProgressText>
            <Progress value={54} max={100} />
          </ProgressBox>
        </HeadHalf>
      </Halves>
      <ListsRow>
        <LineList lines={source} />
        <LineList lines={target} cjk />
      </ListsRow>
      <UrlRow>
        <label htmlFor="url">Url</label>
        <ComboFrame $width={262}>
          <ComboInput id="url" defaultValue="http://localhost:5000/" />
          <Arrow />
        </ComboFrame>
      </UrlRow>
      <DialogButtons>
        <PushButton $tone="off" disabled>确定(O)</PushButton>
        <PushButton $tone="off" disabled>取消(A)</PushButton>
      </DialogButtons>
      <Grip width="9" height="9" viewBox="0 0 9 9" fill="#bbb">
        <path d="M6 0h2v2H6zM3 3h2v2H3zM6 3h2v2H6zM0 6h2v2H0zM3 6h2v2H3zM6 6h2v2H6z" />
      </Grip>
    </Dialog>
  );
}

export default function App() {
  return (
    <Desktop>
      <GlobalStyle />
      <MainWindow />
      <TranslateDialog />
      <Cursor width="12" height="18" viewBox="0 0 12 18">
        <path d="M1 1v13l3-3 2.500 5.500 2-1L6 10.500h4.500z" fill="#fff" stroke="#222" />
      </Cursor>
      <TaskBar>
        <SystemButton aria-label="开始">
          <svg width="16" height="16" viewBox="0 0 16 16" fill="#fff"><path d="M0 2.300L6.500 1.400v6.100H0zM7.300 1.300L16 0v7.500H7.300zM0 8.300h6.500v6.200L0 13.600zM7.300 8.300H16V16l-8.700-1.300z" /></svg>
        </SystemButton>
        <SystemButton aria-label="搜索"><Lens size={22} color="#fff" /></SystemButton>
        <SystemButton aria-label="任务视图">
          <svg width="16" height="16" viewBox="0 0 16 16" fill="none" stroke="#dfe4e6"><path d="M1.500 0v3.500h8V0M1.500 16v-3.500h8V16M1.500 5.500h8v5h-8zM13.500 0v3M13.500 8v8" /><path d="M12.500 5h2v2h-2z" fill="#dfe4e6" /></svg>
        </SystemButton>
        <Apps>
          {apps.map((a) => <AppButton key={a.name} $active={a.active} aria-label={a.name}>{a.art}</AppButton>)}
        </Apps>
        <Tray>
          {tray.map((t, i) => <TrayCell key={i} $width={t.width}>{t.art}</TrayCell>)}
          <Clock>11:03<br />2024/6/24</Clock>
        </Tray>
      </TaskBar>
      <Watermark>知乎 @两脚书橱</Watermark>
    </Desktop>
  );
}
